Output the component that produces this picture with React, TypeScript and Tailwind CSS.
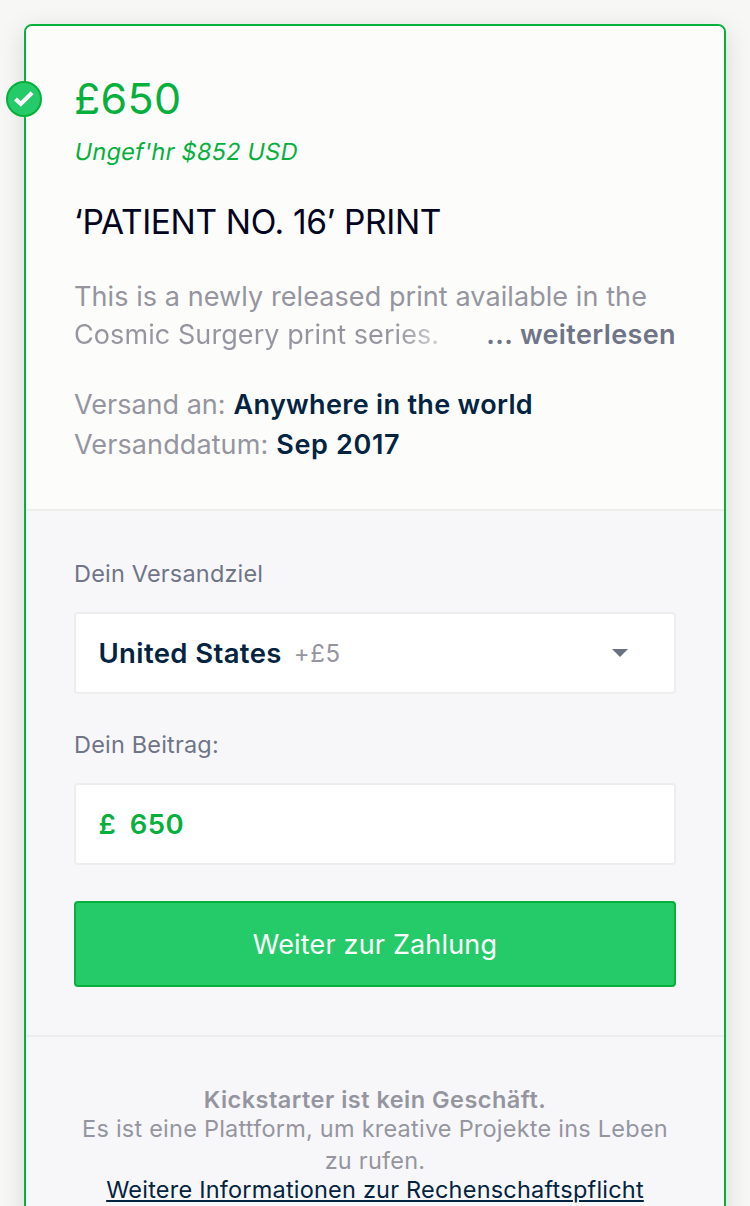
import type { ReactNode } from "react";

function Label({ children }: { children: ReactNode }) {
  return (
    <div className="h-8 whitespace-nowrap text-[23.5px] leading-8 tracking-[0.18px] text-[#6f7487]">{children}</div>
  );
}

function Field({ children }: { children: ReactNode }) {
  return (
    <div className="mt-[22px] flex h-[82px] items-center rounded-[4px] border-2 border-[#ededee] bg-white pl-[22.5px] whitespace-nowrap">
      {children}
    </div>
  );
}

function SelectedBadge() {
  return (
    <div className="absolute top-[55px] -left-5 flex size-9 items-center justify-center rounded-full border-2 border-[#05b03d] bg-[#25cb68]">
      <svg width="20" height="16" viewBox="0 0 20 16" fill="none">
        <path d="M1.5 7.9 L6.8 13 L18.1 1.8" stroke="white" strokeWidth="4.1" />
      </svg>
    </div>
  );
}

export default function App() {
  return (
    <main className="h-[1206px] overflow-hidden bg-[#f7f7f5] px-6 pt-6 font-['Inter',sans-serif]">
      <article className="relative h-[1300px] rounded-lg border-2 border-[#05b03d] bg-[#f7f7fa] shadow-[0_6px_26px_rgba(0,0,0,0.13)]">
        <SelectedBadge />
        <section className="h-[485px] rounded-t-md border-b-2 border-[#ededec] bg-[#fcfcfa] px-12 pt-[46px] whitespace-nowrap">
          <h2 className="h-[52px] text-[43px] leading-[52px] tracking-[0.3px] text-[#05b03d]">£650</h2>
          <p className="mt-[10px] h-9 -skew-x-10 pl-px text-[23.5px] leading-9 tracking-[0.24px] text-[#05b03d]">
            Ungef'hr $852 USD
          </p>
          <h3 className="mt-[30px] h-11 text-[33.5px] leading-11 tracking-[-0.35px] text-[#020321]">
            ‘PATIENT NO. 16’ PRINT
          </h3>
          <div className="mt-[34px] text-[27px] leading-[38px] tracking-[0.08px] text-[#9595a0]">
            <p>This is a newly released print available in the</p>
            <div className="flex justify-between">
              <span className="bg-linear-to-r from-[#9595a0] from-88% to-[#d0d0d5] bg-clip-text text-transparent">
                Cosmic Surgery print series.
              </span>
              <a className="font-semibold tracking-[0.37px] text-[#6f7487]">... weiterlesen</a>
            </div>
          </div>
          <dl className="mt-[31px] text-[27px] leading-10">
            <div className="flex gap-2">
              <dt className="text-[#9595a0]">Versand an:</dt>
              <dd className="font-semibold tracking-[0.32px] text-[#032441]">Anywhere in the world</dd>
            </div>
            <div className="flex gap-2">
              <dt className="tracking-[0.1px] text-[#9595a0]">Versanddatum:</dt>
              <dd className="font-semibold tracking-[0.65px] text-[#032441]">Sep 2017</dd>
            </div>
          </dl>
        </section>
        <section className="h-[526px] border-b-2 border-[#ededef] px-12 pt-[47px]">
          <Label>Dein Versandziel</Label>
          <Field>
            <span className="pt-0.5 text-[27.5px] font-semibold tracking-[0.38px] text-[#032441]">United States</span>
            <span className="ml-3 pt-0.5 text-[24px] tracking-[0.6px] text-[#9595a0]">+£5</span>
            <svg className="mr-[46px] ml-auto" width="16" height="8" viewBox="0 0 16 8">
              <path d="M0 0H16L8 8Z" fill="#6a7083" />
            </svg>
          </Field>
          <div className="h-[35px]" />
          <Label>Dein Beitrag:</Label>
          <Field>
            <span className="pt-0.5 text-[27.5px] font-semibold text-[#05b03d]">£</span>
            <span className="ml-3.5 pt-0.5 text-[27.5px] font-semibold tracking-[0.4px] text-[#05b03d]">650</span>
          </Field>
          <button className="mt-9 h-[86px] w-full rounded-[4px] border-2 border-[#05b03d] bg-[#25cb68] pt-0.5 text-[27px] tracking-[0.17px] text-white">
            Weiter zur Zahlung
          </button>
        </section>
        <footer className="pt-[49px] text-center text-[23.5px] leading-8 tracking-[0.23px] whitespace-nowrap text-[#9595a0]">
          <p className="leading-7 font-semibold tracking-[0.48px]">Kickstarter ist kein Geschäft.</p>
          <p className="-mt-px">
            Es ist eine Plattform, um kreative Projekte ins Leben
            <br />
            zu rufen.
          </p>
          <a className="block leading-[26px] tracking-[0.21px] text-[#032441] underline decoration-2 underline-offset-2">
            Weitere Informationen zur Rechenschaftspflicht
          </a>
        </footer>
      </article>
    </main>
  );
}
